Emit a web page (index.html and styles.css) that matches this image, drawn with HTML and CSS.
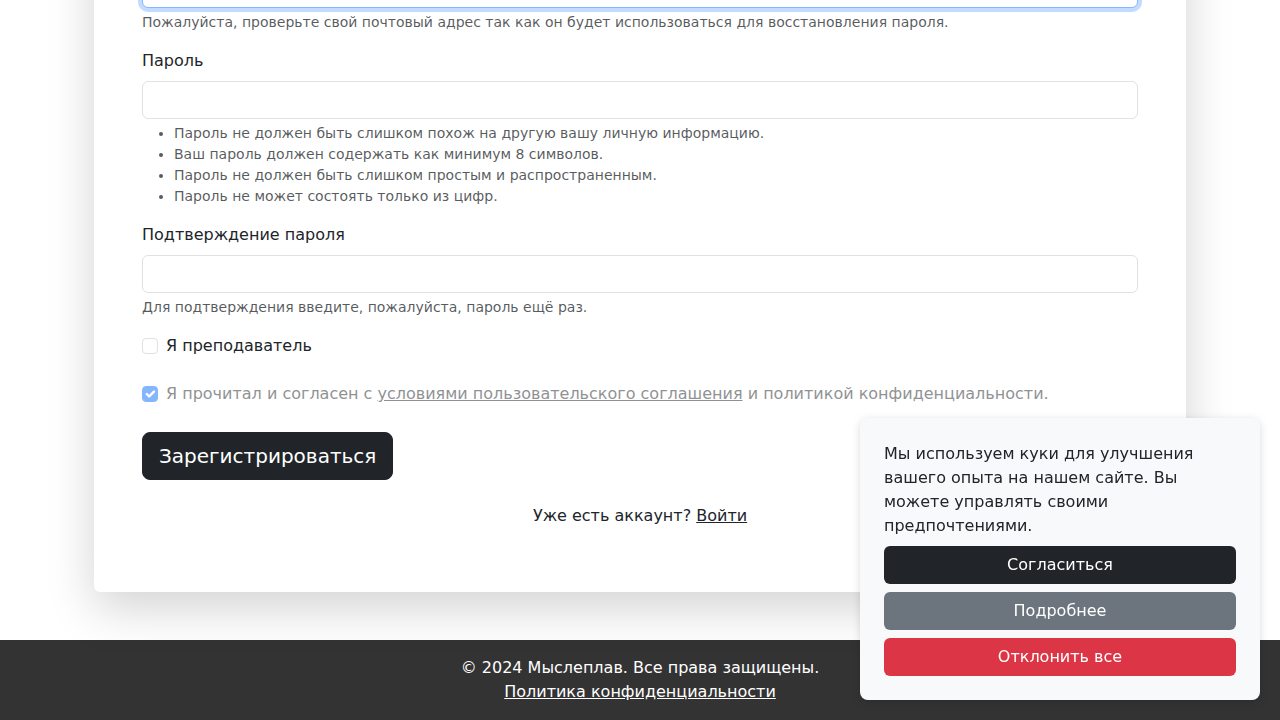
FILE: index.html
```html
<!DOCTYPE html>
<html lang="ru">
<head>
<meta charset="utf-8">
<title>Регистрация — Мыслеплав</title>
<link rel="stylesheet" href="styles.css">
</head>
<body>
<main class="main">
  <div class="card">
    <form class="form">
      <div class="field">
        <label class="label" for="email">Электронная почта</label>
        <input class="input input-focus" id="email" type="email">
        <div class="help">Пожалуйста, проверьте свой почтовый адрес так как он будет использоваться для восстановления пароля.</div>
      </div>
      <div class="field">
        <label class="label" for="pw1">Пароль</label>
        <input class="input" id="pw1" type="password">
        <div class="help">
          <ul class="help-list">
            <li>Пароль не должен быть слишком похож на другую вашу личную информацию.</li>
            <li>Ваш пароль должен содержать как минимум 8 символов.</li>
            <li>Пароль не должен быть слишком простым и распространенным.</li>
            <li>Пароль не может состоять только из цифр.</li>
          </ul>
        </div>
      </div>
      <div class="field">
        <label class="label" for="pw2">Подтверждение пароля</label>
        <input class="input" id="pw2" type="password">
        <div class="help">Для подтверждения введите, пожалуйста, пароль ещё раз.</div>
      </div>
      <div class="check check-teacher">
        <span class="box"></span>
        <span class="check-label">Я преподаватель</span>
      </div>
      <div class="check check-agree">
        <span class="box box-checked">
          <svg viewBox="0 0 20 20" width="16" height="16"><path fill="none" stroke="#fff" stroke-linecap="round" stroke-linejoin="round" stroke-width="3" d="M6 10l3 3l6-6"/></svg>
        </span>
        <span class="check-label">Я прочитал и согласен с <a class="agree-link" href="#">условиями пользовательского соглашения</a> и политикой конфиденциальности.</span>
      </div>
      <button class="btn-submit" type="button">Зарегистрироваться</button>
      <p class="login-line">Уже есть аккаунт? <a class="login-link" href="#">Войти</a></p>
    </form>
  </div>
</main>
<footer class="footer">
  <div>© 2024 Мыслеплав. Все права защищены.</div>
  <div><a class="footer-link" href="#">Политика конфиденциальности</a></div>
</footer>
<div class="cookie">
  <p class="cookie-text">Мы используем куки для улучшения вашего опыта на нашем сайте. Вы можете управлять своими предпочтениями.</p>
  <button class="cbtn cbtn-dark" type="button">Согласиться</button>
  <button class="cbtn cbtn-grey" type="button">Подробнее</button>
  <button class="cbtn cbtn-red" type="button">Отклонить все</button>
</div>
</body>
</html>
```
FILE: styles.css
```css
* { box-sizing: border-box; }
html, body { margin: 0; padding: 0; }
body {
  font-family: "DejaVu Sans", "Liberation Sans", sans-serif;
  font-size: 16px;
  line-height: 1.5;
  color: #212529;
  background: #fff;
  overflow: hidden;
}
.main {
  display: flex;
  justify-content: center;
  padding-bottom: 48px;
}
.card {
  width: 1092px;
  margin-top: -110px;
  padding: 48px;
  background: #fff;
  border-radius: 6px;
  box-shadow: 0 16px 48px rgba(0, 0, 0, 0.175);
}
.form { display: flex; flex-direction: column; }
.field { margin-bottom: 16px; }
.label { display: block; margin-bottom: 8px; }
.input {
  display: block;
  width: 100%;
  height: 38px;
  padding: 6px 12px;
  font: inherit;
  border: 1px solid #dee2e6;
  border-radius: 6px;
  background: #fff;
  outline: none;
}
.input-focus {
  border-color: #86b7fe;
  box-shadow: 0 0 0 4px rgba(13, 110, 253, 0.25);
}
.help {
  margin-top: 4px;
  font-size: 14px;
  line-height: 21px;
  color: rgba(33, 37, 41, 0.75);
}
.help-list { margin: 0; padding-left: 32px; }
.check { display: flex; align-items: flex-start; gap: 8px; }
.check-teacher { margin-bottom: 24px; }
.check-agree { margin-bottom: 26px; }
.box {
  flex: none;
  width: 16px;
  height: 16px;
  margin-top: 4px;
  border: 1px solid #dee2e6;
  border-radius: 4px;
  background: #fff;
  display: flex;
}
.box-checked {
  background: #0d6efd;
  border-color: #0d6efd;
  opacity: 0.5;
}
.box-checked svg { margin: -1px; }
.check-agree .check-label { opacity: 0.5; }
.agree-link { color: inherit; text-decoration: underline; }
.btn-submit {
  align-self: flex-start;
  height: 48px;
  padding: 8px 16px;
  font: inherit;
  font-size: 20px;
  line-height: 30px;
  color: #fff;
  background: #212529;
  border: 1px solid #212529;
  border-radius: 8px;
}
.login-line { margin: 24px 0 16px; text-align: center; }
.login-link { color: #212529; text-decoration: underline; }
.footer {
  height: 80px;
  padding: 16px 0;
  background: #333;
  color: #fff;
  text-align: center;
}
.footer-link { color: #fff; text-decoration: underline; }
.cookie {
  position: fixed;
  right: 20px;
  bottom: 20px;
  width: 400px;
  padding: 24px;
  background: #f8f9fa;
  border-radius: 8px;
  box-shadow: 0 2px 8px rgba(0, 0, 0, 0.15);
  display: flex;
  flex-direction: column;
  gap: 8px;
}
.cookie-text { margin: 0; }
.cbtn {
  height: 38px;
  padding: 6px 12px;
  font: inherit;
  color: #fff;
  border: 0;
  border-radius: 6px;
  text-align: center;
}
.cbtn-dark { background: #212529; }
.cbtn-grey { background: #6c757d; }
.cbtn-red { background: #dc3545; }
```
